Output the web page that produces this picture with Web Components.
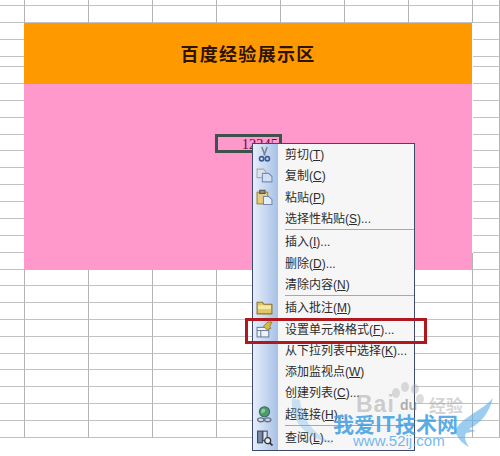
<!DOCTYPE html>
<html lang="zh">
<head>
<meta charset="utf-8">
<title>百度经验展示区</title>
<style>
    html, body {
        margin: 0;
        padding: 0;
        background: #fff;
        overflow: hidden;
    }
    body {
        position: relative;
        width: 500px;
        height: 456px;
    }
</style>
</head>
<body>
<excel-sheet heading="百度经验展示区" value="12345"></excel-sheet>

<context-menu>
    <menu-item label="剪切" key-char="T"><svg viewBox="0 0 16 16"><path d="M5.500 1l3 8M10.500 1l-3 8" stroke="#77808e" stroke-width="1.400" fill="none"/><circle cx="5.300" cy="12" r="2" fill="none" stroke="#3a5a9a" stroke-width="1.500"/><circle cx="10.700" cy="12" r="2" fill="none" stroke="#3a5a9a" stroke-width="1.500"/></svg></menu-item>
    <menu-item label="复制" key-char="C"><svg viewBox="0 0 16 16"><path d="M1 2h6l2 2v6H1z" fill="#dfe3e8" stroke="#a2abb6"/><path d="M6 6h6l3 3v5H6z" fill="#d3dff0" stroke="#6f8fbe"/></svg></menu-item>
    <menu-item label="粘贴" key-char="P"><svg viewBox="0 0 16 16"><rect x="1" y="3" width="10" height="11" fill="#e6cb80" stroke="#a08438"/><rect x="3.500" y="1.200" width="5" height="3" fill="#8c8c8c" stroke="#555"/><path d="M7 7h5l3 3v4.500H7z" fill="#e9eef6" stroke="#7088ae"/></svg></menu-item>
    <menu-item label="选择性粘贴" key-char="S" suffix="..."></menu-item>
    <menu-separator></menu-separator>
    <menu-item label="插入" key-char="I" suffix="..."></menu-item>
    <menu-item label="删除" key-char="D" suffix="..."></menu-item>
    <menu-item label="清除内容" key-char="N"></menu-item>
    <menu-separator></menu-separator>
    <menu-item label="插入批注" key-char="M"><svg viewBox="0 0 16 16"><path d="M1 3h5l1.500 2H15v9H1z" fill="#e2c660" stroke="#8a7430"/><path d="M2 6h12v3.500H2z" fill="#f6e9a8"/></svg></menu-item>
    <menu-item label="设置单元格格式" key-char="F" suffix="..."><svg viewBox="0 0 16 16"><rect x="1" y="6" width="11" height="9" fill="#f0f4fa" stroke="#6a7f9e"/><path d="M1 9h11M4.500 9v6" stroke="#6a7f9e"/><path d="M7 5l4-4h4l-2 4 1 2-4 1z" fill="#d9b848" stroke="#8a6a20" stroke-width=".7"/></svg></menu-item>
    <menu-item label="从下拉列表中选择" key-char="K" suffix="..."></menu-item>
    <menu-item label="添加监视点" key-char="W"></menu-item>
    <menu-item label="创建列表" key-char="C" suffix="..."></menu-item>
    <menu-item label="超链接" key-char="H" suffix="..."><svg viewBox="0 0 16 16"><circle cx="8" cy="5.500" r="4.800" fill="#4f9a6a" stroke="#2f6a7e"/><path d="M5.500 3c2-1 4 0 3 2s-3 1-4 2.500" fill="#8fcf8a"/><ellipse cx="4.500" cy="13" rx="3" ry="1.800" fill="none" stroke="#6a7480" stroke-width="1.300"/><ellipse cx="11" cy="13" rx="3" ry="1.800" fill="none" stroke="#6a7480" stroke-width="1.300"/></svg></menu-item>
    <menu-separator></menu-separator>
    <menu-item label="查阅" key-char="L" suffix="..."><svg viewBox="0 0 16 16"><rect x="1.500" y="2" width="4.500" height="11" fill="#7a8ca8" stroke="#38465e"/><rect x="6.500" y="2" width="4" height="9" fill="#dfe6f0" stroke="#38465e"/><circle cx="11" cy="11" r="2.800" fill="#e8f0fa" stroke="#333" stroke-width="1.200"/><path d="M13 13l2.500 2.500" stroke="#333" stroke-width="1.600"/></svg></menu-item>
</context-menu>

<highlight-box></highlight-box>
<site-watermark></site-watermark>

<script>
class ExcelSheet extends HTMLElement {
    constructor() {
        super();
        this.attachShadow({ mode: "open" });

        const rows = [6, 17, 17, 17, 10];
        for (let i = 0; i < 11; i++) rows.push(16.9);
        for (let i = 0; i < 11; i++) rows.push(16.8);

        const columns = [25, 64, 64, 64, 64, 64, 64, 64, 27];

        let cells = "";
        rows.forEach((height, r) => {
            columns.forEach((width, c) => {
                const insideBlock = c >= 1 && c <= 7 && r >= 2 && r <= 15;
                if (!insideBlock) {
                    cells += `<div class="cell" style="grid-row:${r + 1};grid-column:${c + 1}"></div>`;
                }
            });
        });

        this.shadowRoot.innerHTML = `
            <style>
                :host {
                    display: block;
                    position: relative;
                    width: 500px;
                    height: 456px;
                    overflow: hidden;
                }
                .grid {
                    display: grid;
                    grid-template-columns: ${columns.map(w => w + "px").join(" ")};
                    grid-template-rows: ${rows.map(h => h + "px").join(" ")};
                }
                .cell {
                    box-sizing: border-box;
                    border-right: 1px solid #b4b4b4;
                    border-bottom: 1px solid #c2c2c2;
                }
                .title {
                    grid-row: 3 / 7;
                    grid-column: 2 / 9;
                    display: flex;
                    align-items: center;
                    justify-content: center;
                    margin-left: -1px;
                    margin-right: 1px;
                    background: #ff9900;
                    color: #2e1400;
                    font: bold 18px "Noto Sans CJK SC", sans-serif;
                    letter-spacing: 1.3px;
                }
                .pink {
                    grid-row: 7 / 18;
                    grid-column: 2 / 9;
                    margin-left: -1px;
                    margin-right: 1px;
                    background: #ff99cc;
                }
                .active {
                    position: absolute;
                    left: 215px;
                    top: 134px;
                    width: 60px;
                    height: 13px;
                    border: 3px solid #40504a;
                    color: #6e0c44;
                    font: 14.5px/15px "Liberation Serif", serif;
                    text-align: right;
                    padding-right: 1px;
                }
            </style>
            <div class="grid">
                ${cells}
                <div class="title">${this.getAttribute("heading")}</div>
                <div class="pink"></div>
            </div>
            <div class="active">${this.getAttribute("value")}</div>
        `;
    }
}

class ContextMenu extends HTMLElement {
    constructor() {
        super();
        this.attachShadow({ mode: "open" });
        this.shadowRoot.innerHTML = `
            <style>
                :host {
                    display: flex;
                    flex-direction: column;
                    position: absolute;
                    left: 252px;
                    top: 143px;
                    width: 161px;
                    height: 306px;
                    border: 1px solid #3d4a6c;
                    background: linear-gradient(90deg, #e6eefa 0, #a8c1e6 25px, #f6f6f6 25px);
                    font: 12px "Liberation Sans", "Noto Sans CJK SC", sans-serif;
                    color: #2c2c2c;
                }
            </style>
            <slot></slot>
        `;
    }
}

class MenuItem extends HTMLElement {
    constructor() {
        super();
        this.attachShadow({ mode: "open" });

        const label = this.getAttribute("label");
        const key = this.getAttribute("key-char");
        const suffix = this.getAttribute("suffix") || "";

        this.shadowRoot.innerHTML = `
            <style>
                :host {
                    display: flex;
                    align-items: center;
                    height: 21.3px;
                    flex: none;
                }
                .icon {
                    display: flex;
                    justify-content: center;
                    align-items: center;
                    width: 23px;
                    margin-right: 2px;
                    flex: none;
                }
                ::slotted(svg) {
                    width: 17px;
                    height: 17px;
                }
                .text {
                    margin-left: 7px;
                    margin-bottom: 2px;
                    white-space: nowrap;
                }
                u {
                    text-underline-offset: 1px;
                }
            </style>
            <span class="icon"><slot></slot></span>
            <span class="text">${label}(<u>${key}</u>)${suffix}</span>
        `;
    }
}

class MenuSeparator extends HTMLElement {
    constructor() {
        super();
        this.attachShadow({ mode: "open" });
        this.shadowRoot.innerHTML = `
            <style>
                :host {
                    display: block;
                    flex: none;
                    height: 1px;
                    margin: 0 0 1px 32px;
                    background: #a8a8a8;
                }
            </style>
        `;
    }
}

class HighlightBox extends HTMLElement {
    constructor() {
        super();
        this.attachShadow({ mode: "open" });
        this.shadowRoot.innerHTML = `
            <style>
                :host {
                    display: block;
                    position: absolute;
                    left: 245px;
                    top: 318px;
                    width: 176px;
                    height: 20px;
                    border: 3px solid #b01820;
                }
            </style>
        `;
    }
}

class SiteWatermark extends HTMLElement {
    constructor() {
        super();
        this.attachShadow({ mode: "open" });
        this.shadowRoot.innerHTML = `
            <style>
                :host {
                    display: block;
                    position: absolute;
                    left: 0;
                    top: 0;
                    width: 500px;
                    height: 456px;
                    pointer-events: none;
                }
                svg {
                    position: absolute;
                    left: 0;
                    top: 0;
                }
                span {
                    position: absolute;
                    white-space: nowrap;
                }
                .baidu {
                    left: 356px;
                    top: 392px;
                    font: bold 23px/24px "Liberation Sans", sans-serif;
                    color: rgba(150, 150, 150, .45);
                    letter-spacing: 1px;
                }
                .du {
                    left: 400px;
                    top: 397px;
                    font: bold 14px/16px "Liberation Sans", sans-serif;
                    color: rgba(110, 110, 110, .55);
                }
                .jingyan {
                    left: 429px;
                    top: 395px;
                    font: bold 17px/20px "Noto Sans CJK SC", sans-serif;
                    color: rgba(170, 170, 170, .5);
                }
                .site {
                    left: 333px;
                    top: 411px;
                    font: bold 21px/24px "Noto Sans CJK SC", sans-serif;
                    color: rgba(62, 158, 226, .85);
                }
                .url {
                    left: 353px;
                    top: 432px;
                    font: 15px/18px "Liberation Sans", sans-serif;
                    color: rgba(90, 172, 232, .85);
                }
            </style>
            <svg width="500" height="456" viewBox="0 0 500 456">
                <g fill="rgba(170,170,170,.4)">
                    <ellipse cx="396" cy="393" rx="4" ry="5"/>
                    <ellipse cx="405" cy="387" rx="4" ry="5"/>
                    <ellipse cx="415" cy="389" rx="4" ry="5"/>
                    <ellipse cx="420" cy="399" rx="4" ry="5"/>
                </g>
                <path d="M292 398c-2 22 12 40 42 46-20-10-32-24-34-44z" fill="rgba(110,180,235,.35)"/>
                <path d="M493 398c-12 14-34 20-38 34 4 8 8 12 14 15-4-6-5-10-3-14l10-2-7-2c12-6 20-16 24-31z" fill="rgba(90,170,230,.6)"/>
            </svg>
            <span class="baidu">Bai</span>
            <span class="du">du</span>
            <span class="jingyan">经验</span>
            <span class="site">我爱IT技术网</span>
            <span class="url">www.52ij.com</span>
        `;
    }
}

customElements.define("excel-sheet", ExcelSheet);
customElements.define("context-menu", ContextMenu);
customElements.define("menu-item", MenuItem);
customElements.define("menu-separator", MenuSeparator);
customElements.define("highlight-box", HighlightBox);
customElements.define("site-watermark", SiteWatermark);
</script>
</body>
</html>
